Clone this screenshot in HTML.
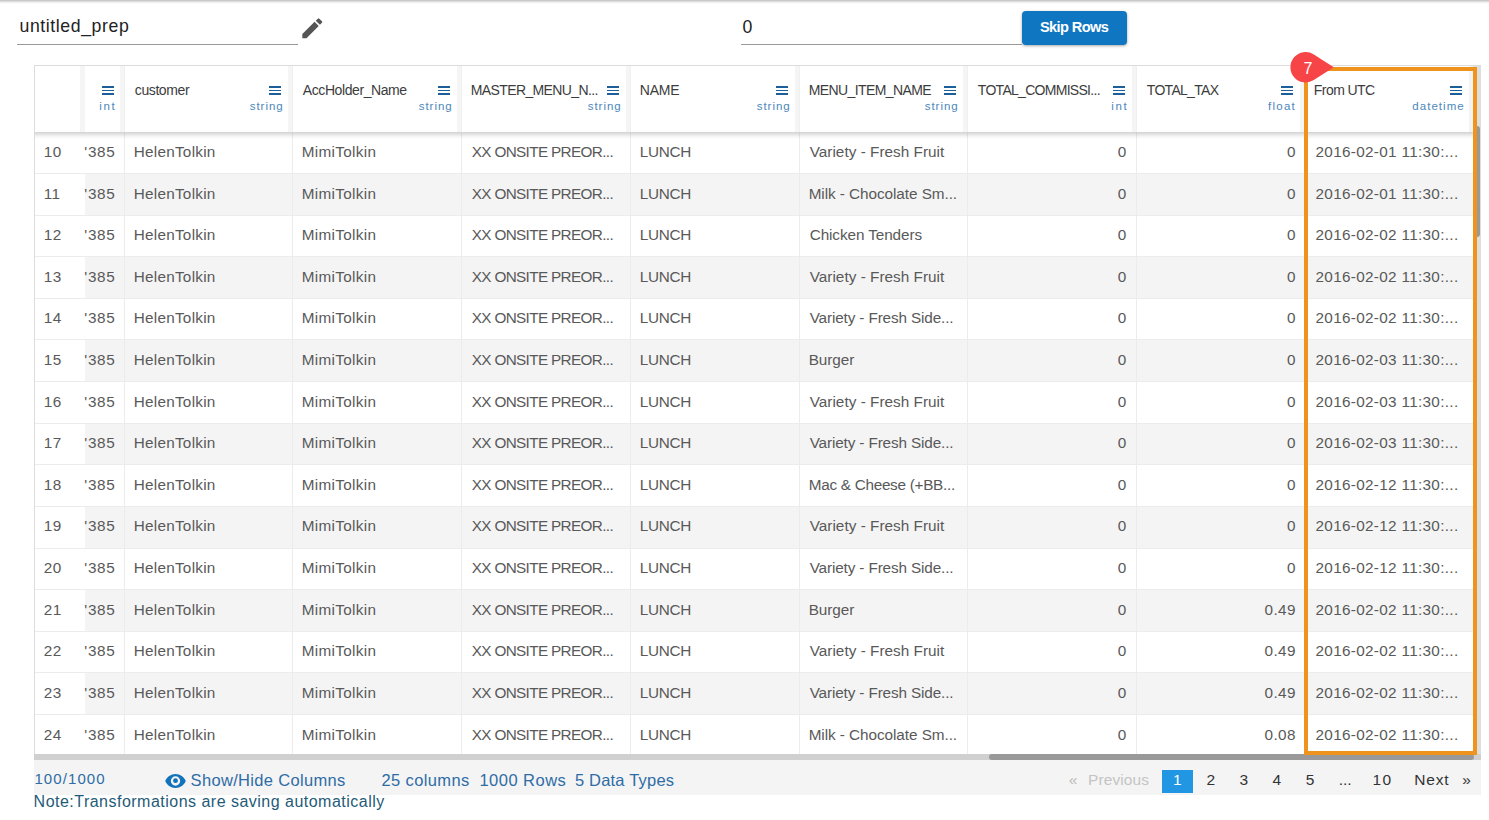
<!DOCTYPE html><html><head><meta charset="utf-8"><style>
*{box-sizing:border-box;margin:0;padding:0}
html,body{width:1489px;height:820px;overflow:hidden;background:#fff;font-family:"Liberation Sans",sans-serif}
.a{position:absolute}
.topsh{left:0;top:0;width:1489px;height:3.6px;background:linear-gradient(#c8c8c8,#c8c8c8 15%,#e6e6e6 45%,#f6f6f6 75%,rgba(255,255,255,0))}
.t{position:absolute;white-space:nowrap;line-height:1}
.hl{position:absolute;height:1px;background:#9a9a9a}
.btn{left:1022px;top:11px;width:105px;height:34px;border-radius:4px;background:#0f76c1;box-shadow:0 1px 3px rgba(0,0,0,.35)}
.tb{left:34px;top:65px;width:1447px;height:689px;border-top:1px solid #dcdcdc;border-left:1px solid #dcdcdc;overflow:hidden;background:#fff}
.strip{position:absolute;top:0;height:66px;width:4px;background:#f5f5f5}
.hdrsh{position:absolute;left:0;top:65.8px;width:1446px;height:7px;background:linear-gradient(rgba(0,0,0,.18),rgba(0,0,0,.11) 30%,rgba(0,0,0,.04) 65%,rgba(0,0,0,0))}
.row{position:absolute;height:41.615px}
.vb{position:absolute;top:67px;width:1px;height:622px;background:#ececec}
.hb{position:absolute;left:0;width:1440px;height:1px;background:#ececec}
.cell{position:absolute;font-size:15.3px;color:#595959;white-space:nowrap;line-height:1}
.hname{position:absolute;font-size:14px;color:#3c3c3c;white-space:nowrap;line-height:1}
.htype{position:absolute;font-size:11.5px;color:#4d87bb;white-space:nowrap;line-height:1}
.ham{position:absolute;width:12.4px;height:9px}
.ham i{position:absolute;left:0;width:12.4px;background:#1d5f9b}
.foot{left:34px;top:760px;width:1446.5px;height:34.8px;background:#f4f4f4}
.ft{position:absolute;font-size:15.5px;color:#2e6ca6;white-space:nowrap;line-height:1}
.pg{position:absolute;font-size:15.5px;color:#333;white-space:nowrap;line-height:1}
</style></head><body>
<div class="a topsh"></div>
<div class="t" style="left:19.5px;top:17.7px;font-size:17.7px;color:#222;letter-spacing:0.583px">untitled_prep</div>
<div class="hl" style="left:17px;top:44px;width:281px"></div>
<svg class="a" style="left:298.9px;top:15px" width="26.6" height="26.6" viewBox="0 0 24 24"><path fill="#555" d="M3 17.25V21h3.75L17.81 9.94l-3.75-3.75L3 17.25zM20.71 7.04a1 1 0 0 0 0-1.41l-2.34-2.34a1 1 0 0 0-1.41 0l-1.83 1.83 3.75 3.75 1.83-1.83z"/></svg>
<div class="t" style="left:742.5px;top:18.5px;font-size:17.7px;color:#222">0</div>
<div class="hl" style="left:740.7px;top:43.7px;width:281.3px"></div>
<div class="a btn"></div>
<div class="t" style="left:1040px;top:19.5px;font-size:14.6px;color:#fff;font-weight:bold;letter-spacing:-0.625px">Skip Rows</div>
<div class="a tb">
<div class="row" style="top:66.38px;left:50.00px;width:1395px;background:#fff"></div>
<div class="hb" style="top:107.00px"></div>
<div class="row" style="top:108.00px;left:50.00px;width:1395px;background:#f4f4f4"></div>
<div class="hb" style="top:148.62px"></div>
<div class="row" style="top:149.62px;left:50.00px;width:1395px;background:#fff"></div>
<div class="hb" style="top:190.23px"></div>
<div class="row" style="top:191.23px;left:50.00px;width:1395px;background:#f4f4f4"></div>
<div class="hb" style="top:231.85px"></div>
<div class="row" style="top:232.85px;left:50.00px;width:1395px;background:#fff"></div>
<div class="hb" style="top:273.46px"></div>
<div class="row" style="top:274.46px;left:50.00px;width:1395px;background:#f4f4f4"></div>
<div class="hb" style="top:315.08px"></div>
<div class="row" style="top:316.07px;left:50.00px;width:1395px;background:#fff"></div>
<div class="hb" style="top:356.69px"></div>
<div class="row" style="top:357.69px;left:50.00px;width:1395px;background:#f4f4f4"></div>
<div class="hb" style="top:398.31px"></div>
<div class="row" style="top:399.31px;left:50.00px;width:1395px;background:#fff"></div>
<div class="hb" style="top:439.92px"></div>
<div class="row" style="top:440.92px;left:50.00px;width:1395px;background:#f4f4f4"></div>
<div class="hb" style="top:481.53px"></div>
<div class="row" style="top:482.54px;left:50.00px;width:1395px;background:#fff"></div>
<div class="hb" style="top:523.15px"></div>
<div class="row" style="top:524.15px;left:50.00px;width:1395px;background:#f4f4f4"></div>
<div class="hb" style="top:564.77px"></div>
<div class="row" style="top:565.76px;left:50.00px;width:1395px;background:#fff"></div>
<div class="hb" style="top:606.38px"></div>
<div class="row" style="top:607.38px;left:50.00px;width:1395px;background:#f4f4f4"></div>
<div class="hb" style="top:648.00px"></div>
<div class="row" style="top:649.00px;left:50.00px;width:1395px;background:#fff"></div>
<div class="hb" style="top:689.61px"></div>
<div class="vb" style="left:89.00px"></div>
<div class="vb" style="left:257.00px"></div>
<div class="vb" style="left:426.00px"></div>
<div class="vb" style="left:595.00px"></div>
<div class="vb" style="left:764.00px"></div>
<div class="vb" style="left:932.00px"></div>
<div class="vb" style="left:1101.00px"></div>
<div class="vb" style="left:1269.00px"></div>
<div class="cell" style="left:8.80px;top:77.88px;letter-spacing:0.4px">10</div>
<div class="cell" style="right:1365.53px;top:77.88px;letter-spacing:0.667px">'385</div>
<div class="cell" style="left:98.70px;top:77.88px;letter-spacing:0.26px">HelenTolkin</div>
<div class="cell" style="left:266.70px;top:77.88px;letter-spacing:0.322px">MimiTolkin</div>
<div class="cell" style="left:436.70px;top:77.88px;letter-spacing:-0.647px">XX ONSITE PREOR...</div>
<div class="cell" style="left:604.70px;top:77.88px;letter-spacing:-0.25px">LUNCH</div>
<div class="cell" style="left:774.70px;top:77.88px;letter-spacing:0.03px">Variety - Fresh Fruit</div>
<div class="cell" style="right:354.70px;top:77.88px;letter-spacing:0px">0</div>
<div class="cell" style="right:185.60px;top:77.88px;letter-spacing:0px">0</div>
<div class="cell" style="left:1280.50px;top:77.88px;letter-spacing:0.316px">2016-02-01 11:30:...</div>
<div class="cell" style="left:8.80px;top:119.50px;letter-spacing:0.4px">11</div>
<div class="cell" style="right:1365.53px;top:119.50px;letter-spacing:0.667px">'385</div>
<div class="cell" style="left:98.70px;top:119.50px;letter-spacing:0.26px">HelenTolkin</div>
<div class="cell" style="left:266.70px;top:119.50px;letter-spacing:0.322px">MimiTolkin</div>
<div class="cell" style="left:436.70px;top:119.50px;letter-spacing:-0.647px">XX ONSITE PREOR...</div>
<div class="cell" style="left:604.70px;top:119.50px;letter-spacing:-0.25px">LUNCH</div>
<div class="cell" style="left:773.70px;top:119.50px;letter-spacing:-0.057px">Milk - Chocolate Sm...</div>
<div class="cell" style="right:354.70px;top:119.50px;letter-spacing:0px">0</div>
<div class="cell" style="right:185.60px;top:119.50px;letter-spacing:0px">0</div>
<div class="cell" style="left:1280.50px;top:119.50px;letter-spacing:0.316px">2016-02-01 11:30:...</div>
<div class="cell" style="left:8.80px;top:161.12px;letter-spacing:0.4px">12</div>
<div class="cell" style="right:1365.53px;top:161.12px;letter-spacing:0.667px">'385</div>
<div class="cell" style="left:98.70px;top:161.12px;letter-spacing:0.26px">HelenTolkin</div>
<div class="cell" style="left:266.70px;top:161.12px;letter-spacing:0.322px">MimiTolkin</div>
<div class="cell" style="left:436.70px;top:161.12px;letter-spacing:-0.647px">XX ONSITE PREOR...</div>
<div class="cell" style="left:604.70px;top:161.12px;letter-spacing:-0.25px">LUNCH</div>
<div class="cell" style="left:774.70px;top:161.12px;letter-spacing:-0.093px">Chicken Tenders</div>
<div class="cell" style="right:354.70px;top:161.12px;letter-spacing:0px">0</div>
<div class="cell" style="right:185.60px;top:161.12px;letter-spacing:0px">0</div>
<div class="cell" style="left:1280.50px;top:161.12px;letter-spacing:0.316px">2016-02-02 11:30:...</div>
<div class="cell" style="left:8.80px;top:202.73px;letter-spacing:0.4px">13</div>
<div class="cell" style="right:1365.53px;top:202.73px;letter-spacing:0.667px">'385</div>
<div class="cell" style="left:98.70px;top:202.73px;letter-spacing:0.26px">HelenTolkin</div>
<div class="cell" style="left:266.70px;top:202.73px;letter-spacing:0.322px">MimiTolkin</div>
<div class="cell" style="left:436.70px;top:202.73px;letter-spacing:-0.647px">XX ONSITE PREOR...</div>
<div class="cell" style="left:604.70px;top:202.73px;letter-spacing:-0.25px">LUNCH</div>
<div class="cell" style="left:774.70px;top:202.73px;letter-spacing:0.03px">Variety - Fresh Fruit</div>
<div class="cell" style="right:354.70px;top:202.73px;letter-spacing:0px">0</div>
<div class="cell" style="right:185.60px;top:202.73px;letter-spacing:0px">0</div>
<div class="cell" style="left:1280.50px;top:202.73px;letter-spacing:0.316px">2016-02-02 11:30:...</div>
<div class="cell" style="left:8.80px;top:244.35px;letter-spacing:0.4px">14</div>
<div class="cell" style="right:1365.53px;top:244.35px;letter-spacing:0.667px">'385</div>
<div class="cell" style="left:98.70px;top:244.35px;letter-spacing:0.26px">HelenTolkin</div>
<div class="cell" style="left:266.70px;top:244.35px;letter-spacing:0.322px">MimiTolkin</div>
<div class="cell" style="left:436.70px;top:244.35px;letter-spacing:-0.647px">XX ONSITE PREOR...</div>
<div class="cell" style="left:604.70px;top:244.35px;letter-spacing:-0.25px">LUNCH</div>
<div class="cell" style="left:774.70px;top:244.35px;letter-spacing:-0.132px">Variety - Fresh Side...</div>
<div class="cell" style="right:354.70px;top:244.35px;letter-spacing:0px">0</div>
<div class="cell" style="right:185.60px;top:244.35px;letter-spacing:0px">0</div>
<div class="cell" style="left:1280.50px;top:244.35px;letter-spacing:0.316px">2016-02-02 11:30:...</div>
<div class="cell" style="left:8.80px;top:285.96px;letter-spacing:0.4px">15</div>
<div class="cell" style="right:1365.53px;top:285.96px;letter-spacing:0.667px">'385</div>
<div class="cell" style="left:98.70px;top:285.96px;letter-spacing:0.26px">HelenTolkin</div>
<div class="cell" style="left:266.70px;top:285.96px;letter-spacing:0.322px">MimiTolkin</div>
<div class="cell" style="left:436.70px;top:285.96px;letter-spacing:-0.647px">XX ONSITE PREOR...</div>
<div class="cell" style="left:604.70px;top:285.96px;letter-spacing:-0.25px">LUNCH</div>
<div class="cell" style="left:773.70px;top:285.96px;letter-spacing:-0.06px">Burger</div>
<div class="cell" style="right:354.70px;top:285.96px;letter-spacing:0px">0</div>
<div class="cell" style="right:185.60px;top:285.96px;letter-spacing:0px">0</div>
<div class="cell" style="left:1280.50px;top:285.96px;letter-spacing:0.316px">2016-02-03 11:30:...</div>
<div class="cell" style="left:8.80px;top:327.57px;letter-spacing:0.4px">16</div>
<div class="cell" style="right:1365.53px;top:327.57px;letter-spacing:0.667px">'385</div>
<div class="cell" style="left:98.70px;top:327.57px;letter-spacing:0.26px">HelenTolkin</div>
<div class="cell" style="left:266.70px;top:327.57px;letter-spacing:0.322px">MimiTolkin</div>
<div class="cell" style="left:436.70px;top:327.57px;letter-spacing:-0.647px">XX ONSITE PREOR...</div>
<div class="cell" style="left:604.70px;top:327.57px;letter-spacing:-0.25px">LUNCH</div>
<div class="cell" style="left:774.70px;top:327.57px;letter-spacing:0.03px">Variety - Fresh Fruit</div>
<div class="cell" style="right:354.70px;top:327.57px;letter-spacing:0px">0</div>
<div class="cell" style="right:185.60px;top:327.57px;letter-spacing:0px">0</div>
<div class="cell" style="left:1280.50px;top:327.57px;letter-spacing:0.316px">2016-02-03 11:30:...</div>
<div class="cell" style="left:8.80px;top:369.19px;letter-spacing:0.4px">17</div>
<div class="cell" style="right:1365.53px;top:369.19px;letter-spacing:0.667px">'385</div>
<div class="cell" style="left:98.70px;top:369.19px;letter-spacing:0.26px">HelenTolkin</div>
<div class="cell" style="left:266.70px;top:369.19px;letter-spacing:0.322px">MimiTolkin</div>
<div class="cell" style="left:436.70px;top:369.19px;letter-spacing:-0.647px">XX ONSITE PREOR...</div>
<div class="cell" style="left:604.70px;top:369.19px;letter-spacing:-0.25px">LUNCH</div>
<div class="cell" style="left:774.70px;top:369.19px;letter-spacing:-0.132px">Variety - Fresh Side...</div>
<div class="cell" style="right:354.70px;top:369.19px;letter-spacing:0px">0</div>
<div class="cell" style="right:185.60px;top:369.19px;letter-spacing:0px">0</div>
<div class="cell" style="left:1280.50px;top:369.19px;letter-spacing:0.316px">2016-02-03 11:30:...</div>
<div class="cell" style="left:8.80px;top:410.81px;letter-spacing:0.4px">18</div>
<div class="cell" style="right:1365.53px;top:410.81px;letter-spacing:0.667px">'385</div>
<div class="cell" style="left:98.70px;top:410.81px;letter-spacing:0.26px">HelenTolkin</div>
<div class="cell" style="left:266.70px;top:410.81px;letter-spacing:0.322px">MimiTolkin</div>
<div class="cell" style="left:436.70px;top:410.81px;letter-spacing:-0.647px">XX ONSITE PREOR...</div>
<div class="cell" style="left:604.70px;top:410.81px;letter-spacing:-0.25px">LUNCH</div>
<div class="cell" style="left:773.70px;top:410.81px;letter-spacing:-0.274px">Mac &amp; Cheese (+BB...</div>
<div class="cell" style="right:354.70px;top:410.81px;letter-spacing:0px">0</div>
<div class="cell" style="right:185.60px;top:410.81px;letter-spacing:0px">0</div>
<div class="cell" style="left:1280.50px;top:410.81px;letter-spacing:0.316px">2016-02-12 11:30:...</div>
<div class="cell" style="left:8.80px;top:452.42px;letter-spacing:0.4px">19</div>
<div class="cell" style="right:1365.53px;top:452.42px;letter-spacing:0.667px">'385</div>
<div class="cell" style="left:98.70px;top:452.42px;letter-spacing:0.26px">HelenTolkin</div>
<div class="cell" style="left:266.70px;top:452.42px;letter-spacing:0.322px">MimiTolkin</div>
<div class="cell" style="left:436.70px;top:452.42px;letter-spacing:-0.647px">XX ONSITE PREOR...</div>
<div class="cell" style="left:604.70px;top:452.42px;letter-spacing:-0.25px">LUNCH</div>
<div class="cell" style="left:774.70px;top:452.42px;letter-spacing:0.03px">Variety - Fresh Fruit</div>
<div class="cell" style="right:354.70px;top:452.42px;letter-spacing:0px">0</div>
<div class="cell" style="right:185.60px;top:452.42px;letter-spacing:0px">0</div>
<div class="cell" style="left:1280.50px;top:452.42px;letter-spacing:0.316px">2016-02-12 11:30:...</div>
<div class="cell" style="left:8.80px;top:494.04px;letter-spacing:0.4px">20</div>
<div class="cell" style="right:1365.53px;top:494.04px;letter-spacing:0.667px">'385</div>
<div class="cell" style="left:98.70px;top:494.04px;letter-spacing:0.26px">HelenTolkin</div>
<div class="cell" style="left:266.70px;top:494.04px;letter-spacing:0.322px">MimiTolkin</div>
<div class="cell" style="left:436.70px;top:494.04px;letter-spacing:-0.647px">XX ONSITE PREOR...</div>
<div class="cell" style="left:604.70px;top:494.04px;letter-spacing:-0.25px">LUNCH</div>
<div class="cell" style="left:774.70px;top:494.04px;letter-spacing:-0.132px">Variety - Fresh Side...</div>
<div class="cell" style="right:354.70px;top:494.04px;letter-spacing:0px">0</div>
<div class="cell" style="right:185.60px;top:494.04px;letter-spacing:0px">0</div>
<div class="cell" style="left:1280.50px;top:494.04px;letter-spacing:0.316px">2016-02-12 11:30:...</div>
<div class="cell" style="left:8.80px;top:535.65px;letter-spacing:0.4px">21</div>
<div class="cell" style="right:1365.53px;top:535.65px;letter-spacing:0.667px">'385</div>
<div class="cell" style="left:98.70px;top:535.65px;letter-spacing:0.26px">HelenTolkin</div>
<div class="cell" style="left:266.70px;top:535.65px;letter-spacing:0.322px">MimiTolkin</div>
<div class="cell" style="left:436.70px;top:535.65px;letter-spacing:-0.647px">XX ONSITE PREOR...</div>
<div class="cell" style="left:604.70px;top:535.65px;letter-spacing:-0.25px">LUNCH</div>
<div class="cell" style="left:773.70px;top:535.65px;letter-spacing:-0.06px">Burger</div>
<div class="cell" style="right:354.70px;top:535.65px;letter-spacing:0px">0</div>
<div class="cell" style="right:185.23px;top:535.65px;letter-spacing:0.367px">0.49</div>
<div class="cell" style="left:1280.50px;top:535.65px;letter-spacing:0.316px">2016-02-02 11:30:...</div>
<div class="cell" style="left:8.80px;top:577.26px;letter-spacing:0.4px">22</div>
<div class="cell" style="right:1365.53px;top:577.26px;letter-spacing:0.667px">'385</div>
<div class="cell" style="left:98.70px;top:577.26px;letter-spacing:0.26px">HelenTolkin</div>
<div class="cell" style="left:266.70px;top:577.26px;letter-spacing:0.322px">MimiTolkin</div>
<div class="cell" style="left:436.70px;top:577.26px;letter-spacing:-0.647px">XX ONSITE PREOR...</div>
<div class="cell" style="left:604.70px;top:577.26px;letter-spacing:-0.25px">LUNCH</div>
<div class="cell" style="left:774.70px;top:577.26px;letter-spacing:0.03px">Variety - Fresh Fruit</div>
<div class="cell" style="right:354.70px;top:577.26px;letter-spacing:0px">0</div>
<div class="cell" style="right:185.23px;top:577.26px;letter-spacing:0.367px">0.49</div>
<div class="cell" style="left:1280.50px;top:577.26px;letter-spacing:0.316px">2016-02-02 11:30:...</div>
<div class="cell" style="left:8.80px;top:618.88px;letter-spacing:0.4px">23</div>
<div class="cell" style="right:1365.53px;top:618.88px;letter-spacing:0.667px">'385</div>
<div class="cell" style="left:98.70px;top:618.88px;letter-spacing:0.26px">HelenTolkin</div>
<div class="cell" style="left:266.70px;top:618.88px;letter-spacing:0.322px">MimiTolkin</div>
<div class="cell" style="left:436.70px;top:618.88px;letter-spacing:-0.647px">XX ONSITE PREOR...</div>
<div class="cell" style="left:604.70px;top:618.88px;letter-spacing:-0.25px">LUNCH</div>
<div class="cell" style="left:774.70px;top:618.88px;letter-spacing:-0.132px">Variety - Fresh Side...</div>
<div class="cell" style="right:354.70px;top:618.88px;letter-spacing:0px">0</div>
<div class="cell" style="right:185.23px;top:618.88px;letter-spacing:0.367px">0.49</div>
<div class="cell" style="left:1280.50px;top:618.88px;letter-spacing:0.316px">2016-02-02 11:30:...</div>
<div class="cell" style="left:8.80px;top:660.50px;letter-spacing:0.4px">24</div>
<div class="cell" style="right:1365.53px;top:660.50px;letter-spacing:0.667px">'385</div>
<div class="cell" style="left:98.70px;top:660.50px;letter-spacing:0.26px">HelenTolkin</div>
<div class="cell" style="left:266.70px;top:660.50px;letter-spacing:0.322px">MimiTolkin</div>
<div class="cell" style="left:436.70px;top:660.50px;letter-spacing:-0.647px">XX ONSITE PREOR...</div>
<div class="cell" style="left:604.70px;top:660.50px;letter-spacing:-0.25px">LUNCH</div>
<div class="cell" style="left:773.70px;top:660.50px;letter-spacing:-0.057px">Milk - Chocolate Sm...</div>
<div class="cell" style="right:354.70px;top:660.50px;letter-spacing:0px">0</div>
<div class="cell" style="right:185.23px;top:660.50px;letter-spacing:0.367px">0.08</div>
<div class="cell" style="left:1280.50px;top:660.50px;letter-spacing:0.316px">2016-02-02 11:30:...</div>
<div class="a" style="left:0;top:0;width:1446px;height:66.2px;background:#fff"></div>
<div class="strip" style="left:45.00px;width:5px"></div>
<div class="strip" style="left:85.00px"></div>
<div class="strip" style="left:253.00px"></div>
<div class="strip" style="left:422.00px"></div>
<div class="strip" style="left:591.00px"></div>
<div class="strip" style="left:760.00px"></div>
<div class="strip" style="left:928.00px"></div>
<div class="strip" style="left:1097.00px"></div>
<div class="strip" style="left:1265.00px"></div>
<div class="strip" style="left:1434.00px;width:4px;background:#f3f3f3"></div>
<div class="a" style="left:89.00px;top:0;width:1px;height:66.2px;background:#f0f0f0"></div>
<div class="a" style="left:257.00px;top:0;width:1px;height:66.2px;background:#f0f0f0"></div>
<div class="a" style="left:426.00px;top:0;width:1px;height:66.2px;background:#f0f0f0"></div>
<div class="a" style="left:595.00px;top:0;width:1px;height:66.2px;background:#f0f0f0"></div>
<div class="a" style="left:764.00px;top:0;width:1px;height:66.2px;background:#f0f0f0"></div>
<div class="a" style="left:932.00px;top:0;width:1px;height:66.2px;background:#f0f0f0"></div>
<div class="a" style="left:1101.00px;top:0;width:1px;height:66.2px;background:#f0f0f0"></div>
<div class="a" style="left:1269.00px;top:0;width:1px;height:66.2px;background:#f0f0f0"></div>
<div class="hdrsh"></div>
<div class="ham" style="left:66.80px;top:20.00px"><i style="top:0;height:2px"></i><i style="top:3.9px;height:1.2px"></i><i style="top:7px;height:2px"></i></div>
<div class="htype" style="right:1364.70px;top:34.50px;letter-spacing:1.6px">int</div>
<div class="hname" style="left:99.80px;top:17.00px;letter-spacing:-0.4px">customer</div>
<div class="ham" style="left:234.00px;top:20.00px"><i style="top:0;height:2px"></i><i style="top:3.9px;height:1.2px"></i><i style="top:7px;height:2px"></i></div>
<div class="htype" style="right:1197.32px;top:34.50px;letter-spacing:0.98px">string</div>
<div class="hname" style="left:267.80px;top:17.00px;letter-spacing:-0.415px">AccHolder_Name</div>
<div class="ham" style="left:403.00px;top:20.00px"><i style="top:0;height:2px"></i><i style="top:3.9px;height:1.2px"></i><i style="top:7px;height:2px"></i></div>
<div class="htype" style="right:1028.32px;top:34.50px;letter-spacing:0.98px">string</div>
<div class="hname" style="left:435.80px;top:17.00px;letter-spacing:-0.62px">MASTER_MENU_N...</div>
<div class="ham" style="left:572.00px;top:20.00px"><i style="top:0;height:2px"></i><i style="top:3.9px;height:1.2px"></i><i style="top:7px;height:2px"></i></div>
<div class="htype" style="right:859.32px;top:34.50px;letter-spacing:0.98px">string</div>
<div class="hname" style="left:604.80px;top:17.00px;letter-spacing:-0.2px">NAME</div>
<div class="ham" style="left:741.00px;top:20.00px"><i style="top:0;height:2px"></i><i style="top:3.9px;height:1.2px"></i><i style="top:7px;height:2px"></i></div>
<div class="htype" style="right:690.32px;top:34.50px;letter-spacing:0.98px">string</div>
<div class="hname" style="left:773.80px;top:17.00px;letter-spacing:-0.608px">MENU_ITEM_NAME</div>
<div class="ham" style="left:909.00px;top:20.00px"><i style="top:0;height:2px"></i><i style="top:3.9px;height:1.2px"></i><i style="top:7px;height:2px"></i></div>
<div class="htype" style="right:522.32px;top:34.50px;letter-spacing:0.98px">string</div>
<div class="hname" style="left:942.80px;top:17.00px;letter-spacing:-0.706px">TOTAL_COMMISSI...</div>
<div class="ham" style="left:1078.00px;top:20.00px"><i style="top:0;height:2px"></i><i style="top:3.9px;height:1.2px"></i><i style="top:7px;height:2px"></i></div>
<div class="htype" style="right:352.70px;top:34.50px;letter-spacing:1.6px">int</div>
<div class="hname" style="left:1111.80px;top:17.00px;letter-spacing:-0.7px">TOTAL_TAX</div>
<div class="ham" style="left:1246.00px;top:20.00px"><i style="top:0;height:2px"></i><i style="top:3.9px;height:1.2px"></i><i style="top:7px;height:2px"></i></div>
<div class="htype" style="right:185.07px;top:34.50px;letter-spacing:1.225px">float</div>
<div class="hname" style="left:1278.80px;top:17.00px;letter-spacing:-0.557px">From UTC</div>
<div class="ham" style="left:1415.00px;top:20.00px"><i style="top:0;height:2px"></i><i style="top:3.9px;height:1.2px"></i><i style="top:7px;height:2px"></i></div>
<div class="htype" style="right:16.26px;top:34.50px;letter-spacing:1.043px">datetime</div>
<div class="a" style="left:1438.00px;top:0;width:8px;height:689px;background:#dedede"></div>
<div class="a" style="left:1439.00px;top:59.80px;width:6px;height:111px;background:#999;border-radius:3px"></div>
</div>
<div class="a" style="left:34px;top:754px;width:1446.5px;height:6px;background:#d0d0d0"></div>
<div class="a" style="left:989px;top:754px;width:485px;height:6px;background:#999;border-radius:3px"></div>
<div class="a foot"></div>
<div class="ft" style="left:34.4px;top:771.1px;font-size:15px;letter-spacing:1.1px">100/1000</div>
<svg class="a" style="left:165px;top:773.6px" width="21" height="14" viewBox="0 0 22 15"><path fill="#1272bb" d="M11 0C6 0 1.7 3.1 0 7.5 1.7 11.9 6 15 11 15s9.3-3.1 11-7.5C20.3 3.1 16 0 11 0zm0 12.5a5 5 0 1 1 0-10 5 5 0 0 1 0 10zm0-8a2.6 2.6 0 1 0 0 5.2 2.6 2.6 0 0 0 0-5.2z"/></svg>
<div class="ft" style="left:190.6px;top:771.8px;font-size:16.5px;letter-spacing:0.325px">Show/Hide Columns</div>
<div class="ft" style="left:381.5px;top:771.8px;font-size:16.5px;letter-spacing:0.378px">25 columns</div>
<div class="ft" style="left:479.4px;top:771.8px;font-size:16.5px;letter-spacing:0.488px">1000 Rows</div>
<div class="ft" style="left:574.9px;top:771.8px;font-size:16.5px;letter-spacing:0.2px">5 Data Types</div>
<div class="ft" style="left:33.6px;top:794.2px;font-size:16px;color:#1f5b78;letter-spacing:0.484px">Note:Transformations are saving automatically</div>
<div class="pg" style="left:1068.8px;top:771.8px;color:#bbb">&laquo;</div>
<div class="pg" style="left:1088px;top:771.8px;color:#c4c4c4;letter-spacing:0.1px">Previous</div>
<div class="a" style="left:1162.2px;top:770px;width:30.6px;height:23px;background:#2196e3"></div>
<div class="pg" style="left:1173px;top:771.8px;color:#fff">1</div>
<div class="pg" style="left:1206.5px;top:771.8px;letter-spacing:0px">2</div>
<div class="pg" style="left:1239.6px;top:771.8px;letter-spacing:0px">3</div>
<div class="pg" style="left:1272.6px;top:771.8px;letter-spacing:0px">4</div>
<div class="pg" style="left:1305.7px;top:771.8px;letter-spacing:0px">5</div>
<div class="pg" style="left:1338.7px;top:771.8px;letter-spacing:0px">...</div>
<div class="pg" style="left:1372.5px;top:771.8px;letter-spacing:1.4px">10</div>
<div class="pg" style="left:1414.2px;top:771.8px;letter-spacing:0.867px">Next</div>
<div class="pg" style="left:1462.2px;top:771.8px;letter-spacing:0px">&raquo;</div>
<div class="a" style="left:1304px;top:67px;width:173px;height:688px;border:4px solid #ef931f"></div>
<svg class="a" style="left:0;top:0" width="1489" height="120"><path fill="#f64447" d="M1333.80 67.30L1313.79 54.50A15.2 15.2 0 1 0 1313.79 80.10Z"/></svg>
<div class="t" style="left:1303.5px;top:60.5px;font-size:16px;color:#fff">7</div>
</body></html>
